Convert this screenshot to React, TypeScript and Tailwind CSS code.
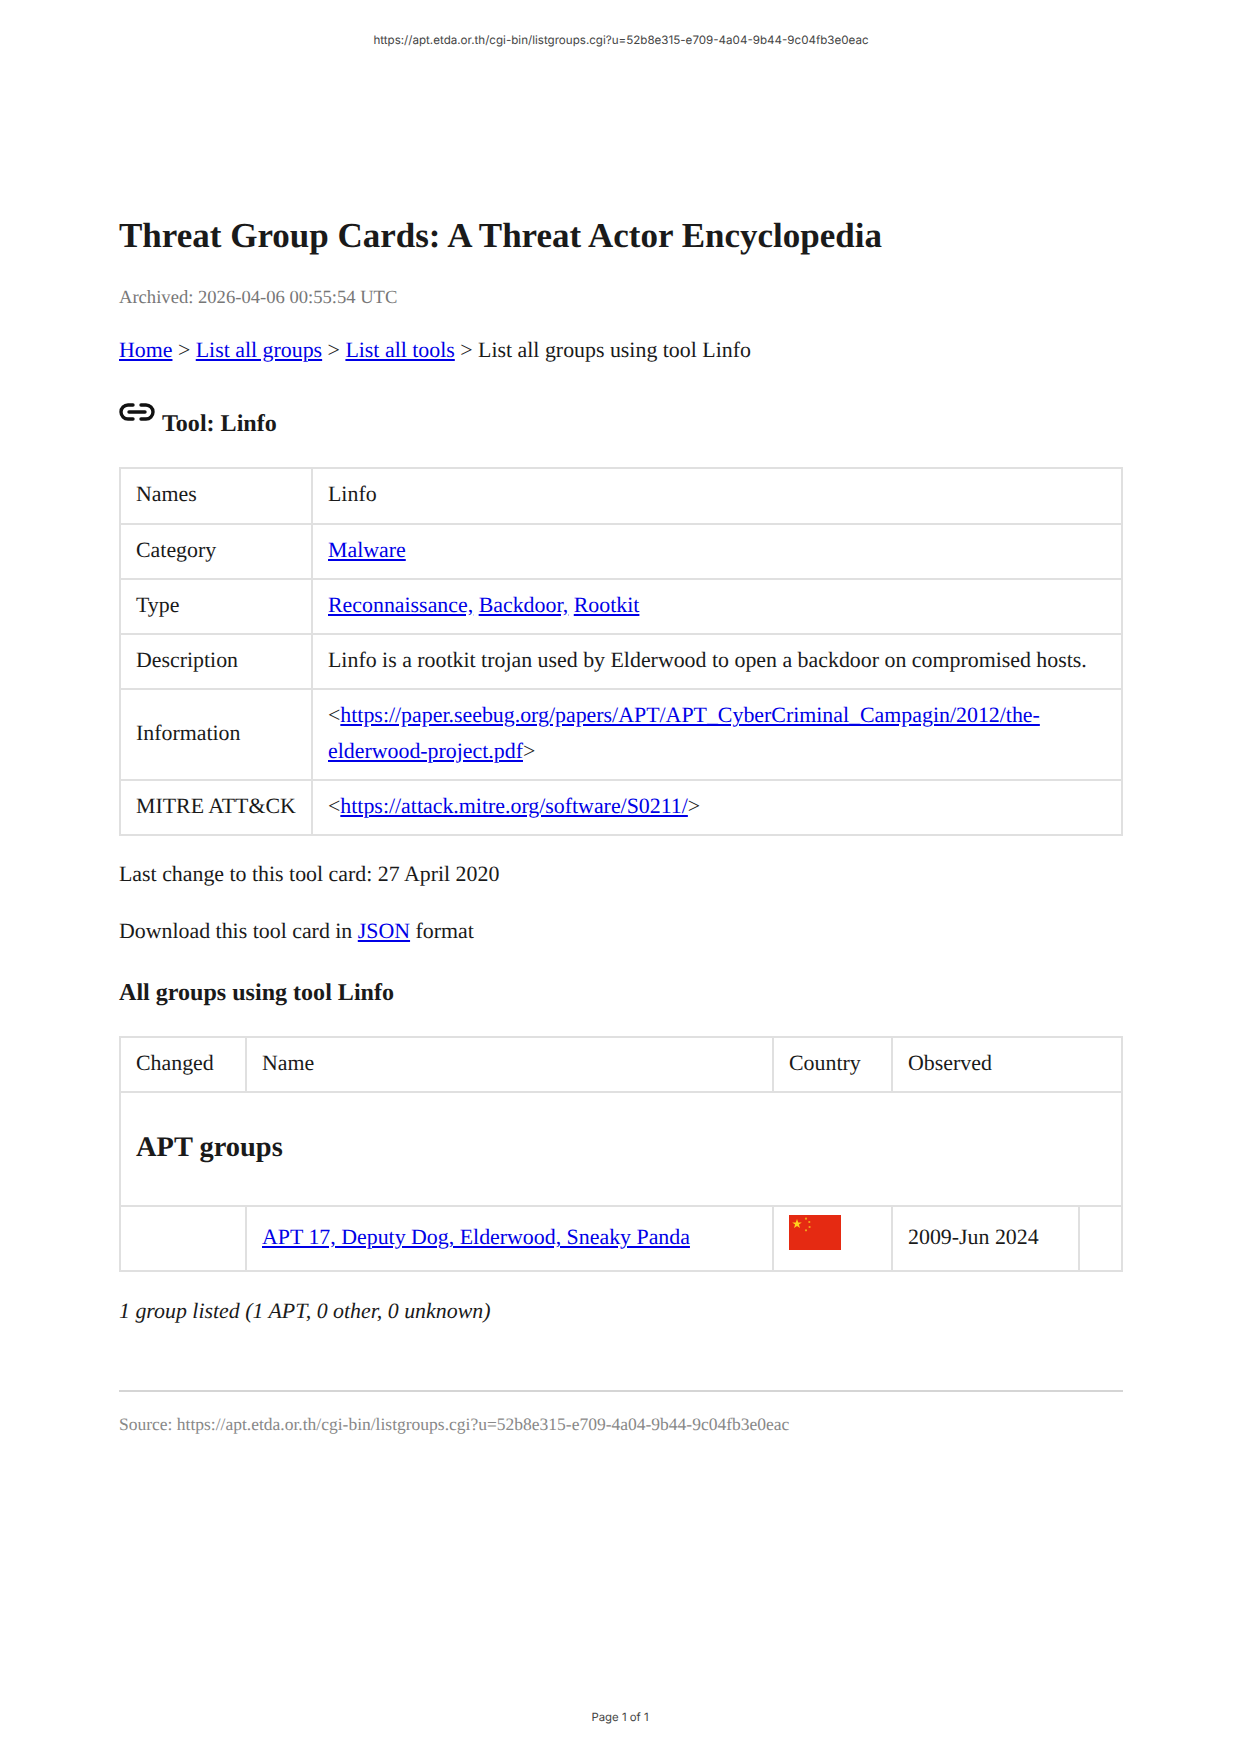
// App.tsx
import React from "react";

const linkClass = "text-[#0000e6] underline";
const cellClass = "border-2 border-[#e0e0e0] px-[15px] pt-[8px] pb-[10px] align-middle font-normal text-left";

const LinkIcon: React.FC = () => (
  <svg className="inline-block w-[36px] h-[18px] align-baseline mr-[7px] relative top-[-10px]" viewBox="0 0 36 18" fill="none" stroke="#111" strokeWidth="3.4" strokeLinecap="round">
    <path d="M14 2H9a7 7 0 0 0 0 14h5" />
    <path d="M22 2h5a7 7 0 0 1 0 14h-5" />
    <path d="M10 9h16" />
  </svg>
);

const ChinaFlag: React.FC = () => (
  <svg className="block w-[52px] h-[35px]" viewBox="0 0 52 35">
    <rect width="52" height="35" fill="#e52a12" />
    <polygon points="8,4 9.2,7.4 12.8,7.4 9.9,9.6 11,13 8,11 5,13 6.1,9.6 3.2,7.4 6.8,7.4" fill="#ffd21e" />
    <circle cx="17" cy="3.7" r="1.1" fill="#f2a71c" />
    <circle cx="20.3" cy="7" r="1.1" fill="#f2a71c" />
    <circle cx="20.6" cy="12" r="1.1" fill="#f2a71c" />
    <circle cx="17" cy="15.3" r="1.1" fill="#f2a71c" />
  </svg>
);

export default function App() {
  return (
    <div className="relative h-[1756px] bg-white text-[#1a1a1a] font-['Liberation_Serif',serif] text-[21.88px] leading-[35.3px] [text-rendering:geometricPrecision]">
      <div className="pt-[30px] text-center font-['Inter',sans-serif] text-[11.6px] leading-[20px] text-[#444]">
        https://apt.etda.or.th/cgi-bin/listgroups.cgi?u=52b8e315-e709-4a04-9b44-9c04fb3e0eac
      </div>

      <main className="mx-[119px] mt-[159px]">
        <h1 className="text-[35px] leading-[54px] font-bold">Threat Group Cards: A Threat Actor Encyclopedia</h1>
        <p className="mt-[20px] text-[18.6px] leading-[30px] text-[#777]">Archived: 2026-04-06 00:55:54 UTC</p>
        <p className="mt-[20px]">
          <a className={linkClass}>Home</a> &gt; <a className={linkClass}>List all groups</a> &gt;{" "}
          <a className={linkClass}>List all tools</a> &gt; List all groups using tool Linfo
        </p>

        <h2 className="mt-[38px] text-[24.07px] leading-[36px] font-bold">
          <LinkIcon />
          Tool: Linfo
        </h2>

        <table className="mt-[25px] w-full border-collapse table-fixed">
          <colgroup>
            <col className="w-[192px]" />
            <col />
          </colgroup>
          <tbody>
            <tr>
              <td className={cellClass}>Names</td>
              <td className={cellClass}>Linfo</td>
            </tr>
            <tr>
              <td className={cellClass}>Category</td>
              <td className={cellClass}><a className={linkClass}>Malware</a></td>
            </tr>
            <tr>
              <td className={cellClass}>Type</td>
              <td className={cellClass}>
                <a className={linkClass}>Reconnaissance,</a> <a className={linkClass}>Backdoor,</a>{" "}
                <a className={linkClass}>Rootkit</a>
              </td>
            </tr>
            <tr>
              <td className={cellClass}>Description</td>
              <td className={cellClass}>Linfo is a rootkit trojan used by Elderwood to open a backdoor on compromised hosts.</td>
            </tr>
            <tr>
              <td className={cellClass}>Information</td>
              <td className={cellClass}>
                &lt;<a className={linkClass}>https://paper.seebug.org/papers/APT/APT_CyberCriminal_Campagin/2012/the-<br />elderwood-project.pdf</a>&gt;
              </td>
            </tr>
            <tr>
              <td className={`${cellClass} whitespace-nowrap`}>MITRE ATT&amp;CK</td>
              <td className={cellClass}>
                &lt;<a className={linkClass}>https://attack.mitre.org/software/S0211/</a>&gt;
              </td>
            </tr>
          </tbody>
        </table>

        <p className="mt-[21px]">Last change to this tool card: 27 April 2020</p>
        <p className="mt-[21px]">
          Download this tool card in <a className={linkClass}>JSON</a> format
        </p>

        <h3 className="mt-[26px] text-[24.07px] leading-[36px] font-bold">All groups using tool Linfo</h3>

        <table className="mt-[25px] w-full border-collapse table-fixed">
          <colgroup>
            <col className="w-[126px]" />
            <col className="w-[527px]" />
            <col className="w-[119px]" />
            <col className="w-[187px]" />
            <col />
          </colgroup>
          <tbody>
            <tr>
              <td className={cellClass}>Changed</td>
              <td className={cellClass}>Name</td>
              <td className={cellClass}>Country</td>
              <td className={cellClass} colSpan={2}>Observed</td>
            </tr>
            <tr>
              <td className={`${cellClass} h-[114px]`} colSpan={5}>
                <span className="text-[28.44px] font-bold">APT groups</span>
              </td>
            </tr>
            <tr>
              <td className={`${cellClass} h-[65px]`}></td>
              <td className={cellClass}>
                <a className={linkClass}>APT 17, Deputy Dog, Elderwood, Sneaky Panda</a>
              </td>
              <td className={`${cellClass} !pt-0 !pb-[13px]`}>
                <ChinaFlag />
              </td>
              <td className={cellClass}>2009-Jun 2024</td>
              <td className={cellClass}></td>
            </tr>
          </tbody>
        </table>

        <p className="mt-[22px] italic">1 group listed (1 APT, 0 other, 0 unknown)</p>

        <div className="mt-[60px] border-t-2 border-[#d5d5d5] pt-[17px] text-[17.5px] leading-[30px] text-[#888]">
          Source: https://apt.etda.or.th/cgi-bin/listgroups.cgi?u=52b8e315-e709-4a04-9b44-9c04fb3e0eac
        </div>
      </main>

      <div className="absolute bottom-[29px] left-0 right-0 pr-[2px] text-center font-['Inter',sans-serif] text-[11.4px] leading-[20px] text-[#444]">
        Page 1 of 1
      </div>
    </div>
  );
}
